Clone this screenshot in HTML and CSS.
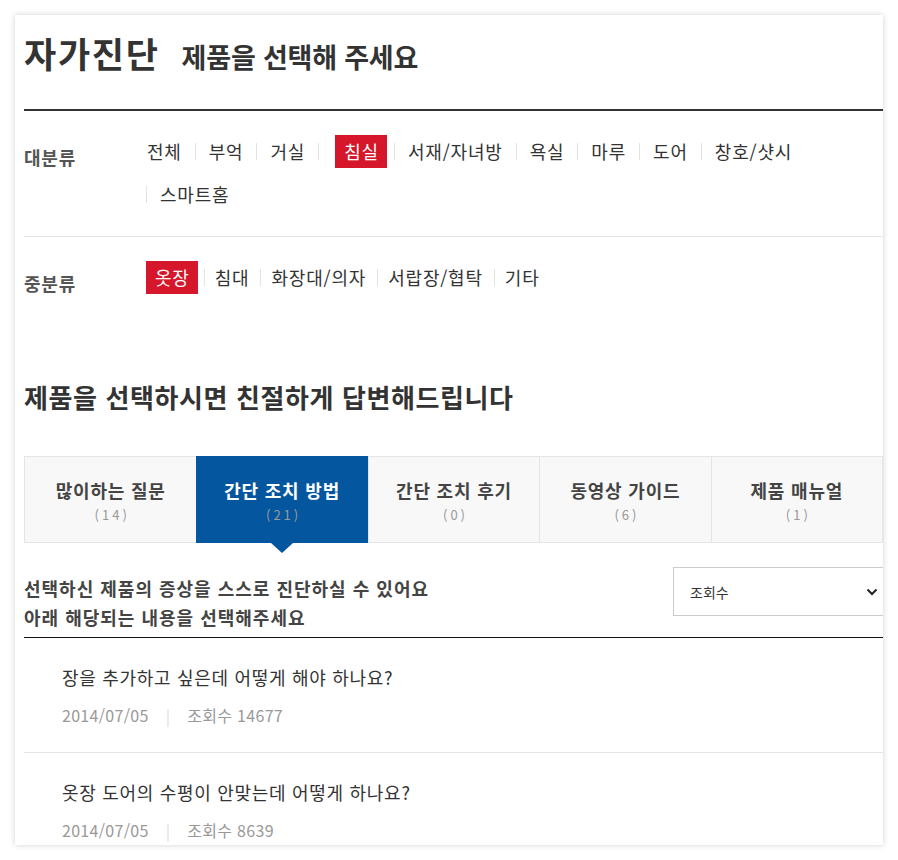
FILE: index.html
```html
<!DOCTYPE html>
<html lang="ko">
<head>
<meta charset="utf-8">
<title>자가진단</title>
<link rel="stylesheet" href="styles.css">
</head>
<body>
<div class="card">
  <header class="page-head">
    <h1 class="page-title">자가진단</h1>
    <p class="page-sub">제품을 선택해 주세요</p>
  </header>

  <section class="cat cat-major">
    <h2 class="cat-label">대분류</h2>
    <ul class="cat-list">
      <li><a>전체</a></li>
      <li><a>부억</a></li>
      <li><a>거실</a></li>
      <li><a class="on">침실</a></li>
      <li><a>서재/자녀방</a></li>
      <li><a>욕실</a></li>
      <li><a>마루</a></li>
      <li><a>도어</a></li>
      <li><a>창호/샷시</a></li>
      <li><a>스마트홈</a></li>
    </ul>
  </section>

  <section class="cat cat-minor">
    <h2 class="cat-label">중분류</h2>
    <ul class="cat-list">
      <li><a class="on">옷장</a></li>
      <li><a>침대</a></li>
      <li><a>화장대/의자</a></li>
      <li><a>서랍장/협탁</a></li>
      <li><a>기타</a></li>
    </ul>
  </section>

  <h2 class="answer-title">제품을 선택하시면 친절하게 답변해드립니다</h2>

  <ul class="tabs">
    <li class="tab"><span class="tab-name">많이하는 질문</span><span class="tab-count">(14)</span></li>
    <li class="tab active"><span class="tab-name">간단 조치 방법</span><span class="tab-count">(21)</span></li>
    <li class="tab"><span class="tab-name">간단 조치 후기</span><span class="tab-count">(0)</span></li>
    <li class="tab"><span class="tab-name">동영상 가이드</span><span class="tab-count">(6)</span></li>
    <li class="tab"><span class="tab-name">제품 매뉴얼</span><span class="tab-count">(1)</span></li>
  </ul>

  <div class="guide">
    <p class="guide-text">선택하신 제품의 증상을 스스로 진단하실 수 있어요<br>아래 해당되는 내용을 선택해주세요</p>
    <div class="sort">
      <select class="sort-select">
        <option>조회수</option>
        <option>최신순</option>
      </select>
      <svg class="sort-arrow" width="12" height="8" viewBox="0 0 12 8"><path d="M1.5 1.5 L6 6 L10.5 1.5" fill="none" stroke="#222" stroke-width="2"/></svg>
    </div>
  </div>

  <ul class="qa-list">
    <li class="qa">
      <p class="qa-q">장을 추가하고 싶은데 어떻게 해야 하나요?</p>
      <p class="qa-meta"><span>2014/07/05</span><span class="bar">|</span><span>조회수 14677</span></p>
    </li>
    <li class="qa">
      <p class="qa-q">옷장 도어의 수평이 안맞는데 어떻게 하나요?</p>
      <p class="qa-meta"><span>2014/07/05</span><span class="bar">|</span><span>조회수 8639</span></p>
    </li>
  </ul>
</div>
</body>
</html>
```

FILE: styles.css
```css
* { box-sizing: border-box; }
html, body { margin: 0; padding: 0; background: #fff; }
body {
  padding: 15px;
  font-family: "Noto Sans CJK KR", "Noto Sans", sans-serif;
  color: #333;
}
ul { list-style: none; margin: 0; padding: 0; }
p, h1, h2 { margin: 0; }

.card {
  width: 868px;
  height: 830px;
  overflow: hidden;
  background: #fff;
  box-shadow: 0 0 6px rgba(0,0,0,0.18);
  padding-left: 9px;
}

.page-head {
  display: flex;
  align-items: baseline;
  gap: 22px;
  height: 96px;
  padding-top: 12px;
  border-bottom: 2px solid #333;
}
.page-title {
  font-size: 35px;
  font-weight: 700;
  letter-spacing: 1.7px;
  color: #333;
}
.page-sub {
  font-size: 27px;
  font-weight: 700;
  letter-spacing: -0.2px;
  color: #333;
}

.cat {
  display: flex;
  align-items: flex-start;
  padding: 24px 0;
}
.cat-major { border-bottom: 1px solid #e5e5e5; padding-bottom: 25px; }
.cat-minor { padding-bottom: 0; }
.cat-label {
  flex: 0 0 122px;
  font-size: 18px;
  font-weight: 700;
  color: #555;
  letter-spacing: 0.8px;
  line-height: 33px;
  padding-top: 6px;
}
.cat-list {
  display: flex;
  flex-wrap: wrap;
  align-items: center;
  row-gap: 10px;
  flex: 1;
}
.cat-list li {
  position: relative;
  display: flex;
  align-items: center;
  padding: 0 4px 0 4px;
}
.cat-list li::before {
  content: "";
  position: absolute;
  left: 0;
  top: 8px;
  width: 1px;
  height: 17px;
  background: #e3e3e3;
}
.cat-list li:first-child { padding-left: 0; }
.cat-list li:first-child::before { display: none; }
.cat-list a {
  display: block;
  height: 33px;
  line-height: 33px;
  padding: 0 9px 0 10px;
  font-size: 18px;
  letter-spacing: 0.8px;
  color: #333;
}
.cat-list li:first-child a { padding-left: 1px; }
.cat-list a.on {
  background: #d6172b;
  color: #fff;
  padding: 0 8px 0 9px;
  margin-left: 13px;
  margin-right: 3px;
}
.cat-list li:first-child a.on { margin-left: 0; padding-left: 9px; }

.cat-minor .cat-list li { padding: 0 3px; }
.cat-minor .cat-list li:first-child { padding-left: 0; }
.cat-minor .cat-list a { padding: 0 8px 0 8px; }
.cat-minor .cat-list a.on { padding: 0 8px 0 9px; margin-right: 3px; }

.answer-title {
  margin-top: 79px;
  font-size: 26px;
  font-weight: 700;
  line-height: 36px;
  color: #333;
  letter-spacing: 0.6px;
}

.tabs {
  margin-top: 41px;
  display: grid;
  grid-template-columns: repeat(5, 1fr);
  height: 87px;
  background: #f8f8f8;
  border: 1px solid #e5e5e5;
}
.tab {
  position: relative;
  display: flex;
  flex-direction: column;
  align-items: center;
  justify-content: center;
  border-left: 1px solid #e5e5e5;
  padding-top: 3px;
}
.tab:first-child { border-left: none; }
.tab-name {
  font-size: 18px;
  font-weight: 700;
  color: #444;
  line-height: 26px;
  letter-spacing: 0.8px;
}
.tab-count {
  margin-top: 2px;
  font-size: 13px;
  color: #999;
  letter-spacing: 3px;
  line-height: 20px;
  margin-left: 3px;
}
.tab.active {
  background: #04579f;
  margin: -1px 0;
  border-left: none;
}
.tab.active .tab-name { color: #fff; }
.tab.active .tab-count { color: #9a9a9a; }
.tab.active::after {
  content: "";
  position: absolute;
  left: 50%;
  bottom: -10px;
  margin-left: -11px;
  border-left: 11px solid transparent;
  border-right: 11px solid transparent;
  border-top: 10px solid #04579f;
}

.guide {
  display: flex;
  justify-content: space-between;
  align-items: flex-start;
  padding-top: 31px;
  padding-bottom: 5px;
  border-bottom: 1px solid #111;
}
.guide-text {
  font-size: 18px;
  font-weight: 700;
  line-height: 29px;
  color: #444;
  letter-spacing: 1px;
}
.sort {
  position: relative;
  margin-top: -7px;
}
.sort-select {
  appearance: none;
  -webkit-appearance: none;
  width: 210px;
  height: 49px;
  border: 1px solid #ccc;
  border-right: none;
  border-radius: 0;
  background: #fff;
  padding: 0 16px;
  font-family: inherit;
  font-size: 14px;
  color: #333;
}
.sort-arrow {
  position: absolute;
  right: 5px;
  top: 21px;
  pointer-events: none;
}

.qa {
  padding: 25px 0 25px 38px;
  border-bottom: 1px solid #e5e5e5;
}
.qa-q {
  font-size: 18px;
  line-height: 28px;
  color: #333;
  letter-spacing: 0.7px;
}
.qa-meta {
  margin-top: 12px;
  font-size: 16px;
  line-height: 24px;
  color: #999;
  letter-spacing: 0.3px;
}
.qa-meta .bar {
  color: #ddd;
  margin: 0 17px 0 17px;
}
```
